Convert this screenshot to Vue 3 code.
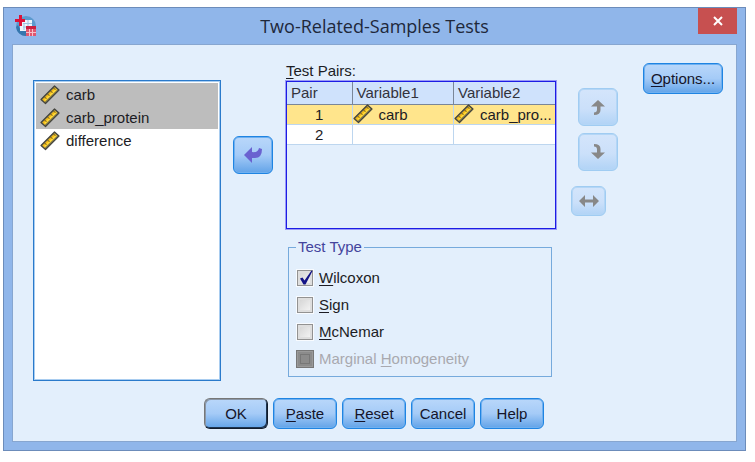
<script setup>
import { ref, h } from 'vue'

const variables = ref([
  { name: 'carb', selected: true },
  { name: 'carb_protein', selected: true },
  { name: 'difference', selected: false },
])

const pairs = [
  { id: 1, first: 'carb', second: 'carb_pro...' },
  { id: 2, first: '', second: '' },
]
const activePair = ref(1)

const tests = ref([
  { id: 'wilcoxon', before: '', key: 'W', after: 'ilcoxon', checked: true, disabled: false },
  { id: 'sign', before: '', key: 'S', after: 'ign', checked: false, disabled: false },
  { id: 'mcnemar', before: '', key: 'M', after: 'cNemar', checked: false, disabled: false },
  { id: 'marginal', before: 'Marginal ', key: 'H', after: 'omogeneity', checked: false, disabled: true },
])

const actions = [
  { key: '', text: 'OK', primary: true },
  { key: 'P', text: 'aste' },
  { key: 'R', text: 'eset' },
  { key: '', text: 'Cancel' },
  { key: '', text: 'Help' },
]

// Ruler glyph that marks a scale variable
const RulerIcon = () =>
  h('svg', { width: 20, height: 20, viewBox: '0 0 20 20', 'aria-hidden': 'true' }, [
    h('path', { d: 'M1 14.5 14.5 1 19 5 5.5 18.5Z', fill: '#8b8450', stroke: '#45453e', 'stroke-width': 1.2, 'stroke-linejoin': 'round' }),
    h('path', { d: 'M3.6 15.6 15.9 3.6', stroke: '#f3b813', 'stroke-width': 3.4, fill: 'none' }),
    h('path', { d: 'M4.6 15.6 16.3 4.2', stroke: '#ffdc3c', 'stroke-width': 1.4, fill: 'none' }),
    h('path', { d: 'M4.4 11.8l2 2M7.4 8.8l2 2M10.4 5.8l2 2M13.4 2.8l2 2', stroke: '#5f5226', 'stroke-width': 1, fill: 'none' }),
  ])
</script>

<template>
  <main class="desktop">
    <section class="window" role="dialog" aria-labelledby="title">
      <header class="titlebar">
        <svg class="logo" width="22" height="22" viewBox="0 0 22 22" aria-hidden="true">
          <circle cx="11" cy="11" r="10" fill="#5c9ace" />
          <path d="M1 12a10 10 0 0 0 10 9v-5Q5 16 3 10Z" fill="#3576ae" />
          <path d="M5 5h12v7h-6v4H5z" fill="#eef6fc" />
          <path d="M8 8.500h9M8 12h3M9 8v7M13 5v6" stroke="#9cc4e2" fill="none" />
          <path d="M11 11h10v10H11z" fill="#e0566f" />
          <path d="M11 11h10v3H11z" fill="#cc1f40" />
          <path d="M11 17.500h10M14.500 14v7M17.500 14v7" stroke="#f7c0ca" fill="none" />
          <path d="M5.500 0v11M0 5.500h10" stroke="#dc1238" stroke-width="3" fill="none" />
        </svg>
        <h1 id="title">Two-Related-Samples Tests</h1>
        <button class="close" type="button" aria-label="Close">
          <svg width="10" height="10" viewBox="0 0 10 10"><path d="M1 1l8 8M9 1L1 9" stroke="#fff" stroke-width="2" /></svg>
        </button>
      </header>

      <div class="client">
        <div class="body">
          <ul class="variables" role="listbox" aria-multiselectable="true" aria-label="Variables">
            <li
              v-for="v in variables"
              :key="v.name"
              role="option"
              :aria-selected="v.selected"
              :class="{ selected: v.selected }"
              @click="v.selected = !v.selected"
            >
              <RulerIcon />{{ v.name }}
            </li>
          </ul>

          <button class="btn square move" type="button" aria-label="Move variables to pairs">
            <svg width="20" height="20" viewBox="0 0 20 20"><path d="M1 10 9 2v5Q15 8 16 3L19 4Q19 13 12 13H9v5Z" fill="#6a62d0" /></svg>
          </button>

          <div class="center">
            <div id="pairs-label" class="label"><u>T</u>est Pairs:</div>
            <div class="pairs">
              <table aria-labelledby="pairs-label">
                <thead>
                  <tr><th class="num">Pair</th><th>Variable1</th><th>Variable2</th></tr>
                </thead>
                <tbody>
                  <tr v-for="p in pairs" :key="p.id" :class="{ active: p.id === activePair }" @click="activePair = p.id">
                    <td class="id">{{ p.id }}</td>
                    <td><div v-if="p.first" class="cell"><RulerIcon /><span>{{ p.first }}</span></div></td>
                    <td><div v-if="p.second" class="cell"><RulerIcon /><span>{{ p.second }}</span></div></td>
                  </tr>
                </tbody>
              </table>
            </div>

            <fieldset class="tests">
              <legend>Test Type</legend>
              <label v-for="t in tests" :key="t.id" :class="{ off: t.disabled }">
                <span class="tick">
                  <input v-model="t.checked" type="checkbox" :disabled="t.disabled" />
                  <svg v-if="t.checked" width="18" height="18" viewBox="0 0 18 18" aria-hidden="true">
                    <path d="M4 9.500 6.500 8.500 8.500 11.500 15.500 1.500 16.500 2 9.500 15.500H7.500Z" fill="#141487" />
                  </svg>
                </span>
                <span>{{ t.before }}<u>{{ t.key }}</u>{{ t.after }}</span>
              </label>
            </fieldset>
          </div>

          <div class="order">
            <button class="btn square" type="button" disabled aria-label="Move up">
              <svg width="16" height="18" viewBox="0 0 16 18"><path d="M8 2 15 8.500H10.500V12Q10.500 17 4 17V14.500Q7 14.500 7 11.500V8.500H1Z" fill="#888" /></svg>
            </button>
            <button class="btn square" type="button" disabled aria-label="Move down">
              <svg width="16" height="18" viewBox="0 0 16 18"><path d="M8 16 15 9.500H10.500V6Q10.500 1 4 1V3.500Q7 3.500 7 6.500V9.500H1Z" fill="#888" /></svg>
            </button>
            <button class="btn swap" type="button" disabled aria-label="Swap variables">
              <svg width="20" height="14" viewBox="0 0 20 14"><path d="M0 7 6 1V5.500H14V1L20 7 14 13V8.500H6V13Z" fill="#888" /></svg>
            </button>
          </div>

          <button class="btn options" type="button"><span><u>O</u>ptions...</span></button>
        </div>

        <footer class="actions">
          <button v-for="a in actions" :key="a.text" class="btn" :class="{ primary: a.primary }" type="button">
            <span><u v-if="a.key">{{ a.key }}</u>{{ a.text }}</span>
          </button>
        </footer>
      </div>
    </section>
  </main>
</template>

<style>
body {
  margin: 0;
  background: #fff;
}
</style>

<style scoped>
* {
  box-sizing: border-box;
}
.desktop {
  padding: 7px 9px 11px 3px;
  font: 15px/20px "Liberation Sans", Arial, sans-serif;
  color: #1c1c24;
}
.window {
  padding: 0 8px 8px;
  border: 1px solid #6c8cba;
  background: #90b6ea;
}
.titlebar {
  display: grid;
  grid-template-columns: 39px 1fr 39px;
  align-items: start;
  height: 36px;
}
.logo {
  margin: 7px 0 0 3px;
}
h1 {
  margin: 0;
  font: 18px/36px "Open Sans", "Noto Sans", sans-serif;
  text-align: center;
  white-space: nowrap;
  color: #20283a;
}
.close {
  display: grid;
  place-items: center;
  height: 26px;
  padding: 0;
  border: 0;
  background: #c75050;
}
.client {
  padding: 18px 13px 12px 20px;
  border: 1px solid #87a6d0;
  background: #e3effc;
}
.body {
  display: grid;
  grid-template-columns: minmax(0, 188fr) 40px minmax(0, 271fr) 51px 92px;
  column-gap: 12px;
  align-items: start;
}
.variables {
  align-self: stretch;
  margin: 17px 0 0;
  padding: 2px;
  border: 1px solid #2a7acb;
  outline: 1px solid #a9cdf0;
  outline-offset: -2px;
  background: #fff;
  list-style: none;
}
.variables li {
  display: flex;
  align-items: center;
  gap: 6px;
  padding-left: 4px;
  line-height: 23px;
}
.variables .selected {
  background: #bdbdbd;
}
.btn {
  display: flex;
  align-items: center;
  justify-content: center;
  height: 31px;
  padding: 0;
  border: 1px solid #1f84e2;
  border-radius: 6px;
  box-shadow: inset 0 0 0 1px #6fb0f0;
  background: linear-gradient(#b9d7fa, #a5cbf7 50%, #62a3e8);
  font: inherit;
  color: #14142a;
}
.btn:disabled {
  border-color: #a0ccf2;
  box-shadow: inset 0 0 0 1px #b4d6f6;
  background: linear-gradient(#d4e5fb, #cbe0fa 55%, #b1d3f6);
}
.square {
  width: 40px;
  height: 38px;
}
.move {
  margin-top: 73px;
}
.center {
  padding-left: 1px;
}
.label {
  line-height: 16px;
}
.pairs {
  height: 148px;
  margin-top: 2px;
  border: 1px solid #1c1ce4;
  outline: 1px solid #9a9af6;
}
table {
  width: 100%;
  table-layout: fixed;
  border-collapse: collapse;
}
th,
td {
  height: 20px;
  padding: 0;
  border-right: 1px solid #bdd6ef;
  border-bottom: 1px solid #bdd6ef;
  background: #fff;
  line-height: 19px;
}
th {
  height: 22px;
  padding-left: 4px;
  border-color: #7a8698;
  background: #cfe2fc;
  font-weight: normal;
  text-align: left;
  color: #33333c;
}
.num {
  width: 65px;
}
.id {
  text-align: center;
}
.active td {
  background: #ffe58c;
}
th:last-child,
td:last-child {
  border-right: 0;
}
.cell {
  display: flex;
  align-items: center;
  gap: 6px;
  height: 19px;
}
.cell span {
  white-space: nowrap;
}
.cell svg,
.variables svg {
  flex: none;
}
.tests {
  min-width: 0;
  margin: 8px 4px 4px 2px;
  padding: 7px 7px 4px;
  border: 1px solid #76aadc;
}
legend {
  padding: 0 2px;
  color: #44449c;
}
.tests label {
  display: flex;
  align-items: center;
  gap: 5px;
  height: 27px;
  white-space: nowrap;
}
.tests .off {
  color: #a9a9af;
}
.tick {
  display: grid;
  width: 18px;
  height: 18px;
}
.tick > * {
  grid-area: 1 / 1;
}
.tick input {
  appearance: none;
  width: 18px;
  height: 18px;
  margin: 0;
  border: 1px solid #f8fbff;
  background: linear-gradient(135deg, #cfcfcf, #fafafa);
  box-shadow: inset 0 0 0 1px #929292, inset 0 0 0 3px #dedede;
}
.tick input:disabled {
  border-color: #777;
  background: #8b8b8b;
  box-shadow: inset 0 0 0 1px #999, inset 0 0 0 3px #8b8b8b, inset 0 0 0 4px #777;
}
u {
  text-underline-offset: 2px;
}
.order {
  display: grid;
  gap: 7px;
  justify-items: end;
  padding: 25px 1px 0 3px;
}
.swap {
  justify-self: start;
  width: 35px;
  height: 30px;
  margin-top: 8px;
}
.options {
  justify-self: end;
  width: 80px;
}
.actions {
  display: flex;
  justify-content: center;
  gap: 5px;
  padding-right: 8px;
  margin-top: 17px;
}
.actions .btn {
  width: 64px;
}
.actions .primary {
  border-color: #777 #111c2c #111c2c #777;
  box-shadow: inset -1px -1px 0 #1d3450, inset 1px 1px 0 #8a97a8;
}
</style>
